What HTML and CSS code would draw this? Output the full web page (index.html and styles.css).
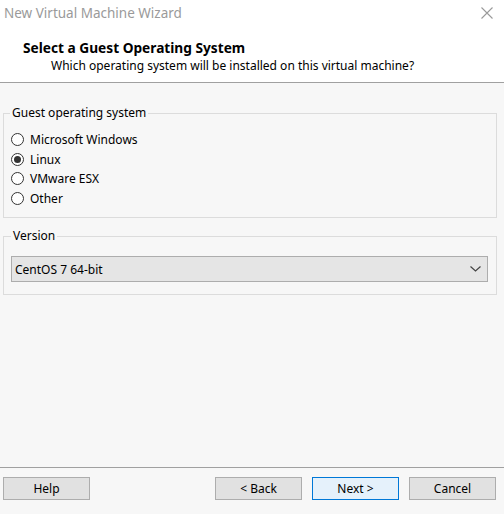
FILE: index.html
```html
<!DOCTYPE html>
<html>
<head>
<meta charset="utf-8">
<link rel="stylesheet" href="styles.css">
</head>
<body>
<div class="window">
  <div class="titlebar">
    <span class="title">New Virtual Machine Wizard</span>
    <svg class="close" width="12" height="12" viewBox="0 0 12 12"><path d="M0.5 0.5 L11.5 11.5 M11.5 0.5 L0.5 11.5" stroke="#9a9a9a" stroke-width="1.1" fill="none"/></svg>
  </div>
  <div class="header">
    <div class="h-title">Select a Guest Operating System</div>
    <div class="h-sub">Which operating system will be installed on this virtual machine?</div>
  </div>
  <div class="content">
    <fieldset class="group group-os">
      <legend>Guest operating system</legend>
      <div class="radio"><span class="circle"></span><span>Microsoft Windows</span></div>
      <div class="radio"><span class="circle checked"></span><span>Linux</span></div>
      <div class="radio"><span class="circle"></span><span>VMware ESX</span></div>
      <div class="radio"><span class="circle"></span><span>Other</span></div>
    </fieldset>
    <fieldset class="group group-ver">
      <legend>Version</legend>
      <div class="select">
        <span>CentOS 7 64-bit</span>
        <svg class="chev" width="11" height="6" viewBox="0 0 11 6"><path d="M0.5 0.5 L5.5 5 L10.5 0.5" stroke="#444" stroke-width="1.2" fill="none"/></svg>
      </div>
    </fieldset>
  </div>
  <div class="footer">
    <button class="btn help">Help</button>
    <button class="btn">&lt; Back</button>
    <button class="btn primary">Next &gt;</button>
    <button class="btn">Cancel</button>
  </div>
</div>
</body>
</html>
```
FILE: styles.css
```css
* { box-sizing: border-box; }
html, body { margin: 0; padding: 0; }
body {
  font-family: "Noto Sans", "Open Sans", sans-serif;
  font-size: 12px;
  color: #000;
  background: #f7f7f7;
}
.window {
  width: 504px;
  height: 514px;
  display: flex;
  flex-direction: column;
}
.titlebar {
  height: 27px;
  background: #fff;
  display: flex;
  align-items: center;
  justify-content: space-between;
  padding: 0 11px 2px 4px;
}
.title {
  color: #9a9a9a;
  font-size: 13.5px;
}
.close { display: block; }
.header {
  background: #fff;
  height: 56px;
  padding: 12px 0 0 23px;
  border-bottom: 1px solid #a0a0a0;
}
.h-title {
  font-weight: bold;
  font-size: 13.7px;
  line-height: 17px;
}
.h-sub {
  padding-left: 28px;
  line-height: 20px;
}
.content {
  flex: 1;
  padding: 22px 7px 0 3px;
  display: flex;
  flex-direction: column;
  gap: 10px;
}
.group {
  margin: 0;
  border: 1px solid #dcdcdc;
  padding: 9px 6px 9px 6px;
  min-width: 0;
}
.group legend {
  padding: 0 2px;
  line-height: 16px;
  margin-left: 0;
}
.radio {
  display: flex;
  align-items: center;
  height: 19.5px;
  gap: 6px;
}
.circle {
  width: 13px;
  height: 13px;
  border: 1px solid #333;
  border-radius: 50%;
  background: #fff;
  display: flex;
  align-items: center;
  justify-content: center;
  margin-left: 1px;
}
.circle.checked::after {
  content: "";
  width: 7px;
  height: 7px;
  border-radius: 50%;
  background: #333;
}
.group-ver { padding: 12px 8px 12px 7px; }
.select {
  height: 26px;
  border: 1px solid #adadad;
  background: #e5e5e5;
  display: flex;
  align-items: center;
  justify-content: space-between;
  padding: 0 6px 0 3px;
}
.chev { display: block; }
.footer {
  border-top: 1px solid #a0a0a0;
  height: 47px;
  padding: 9px 8px 0 3px;
  display: flex;
  align-items: flex-start;
  gap: 10px;
}
.btn {
  width: 87px;
  height: 23px;
  font-family: inherit;
  font-size: 12px;
  color: #000;
  background: #e1e1e1;
  border: 1px solid #adadad;
  padding: 0;
  margin: 0;
}
.btn.help { margin-right: auto; }
.btn.primary {
  background: #e5f1fb;
  border-color: #0078d7;
}
```
